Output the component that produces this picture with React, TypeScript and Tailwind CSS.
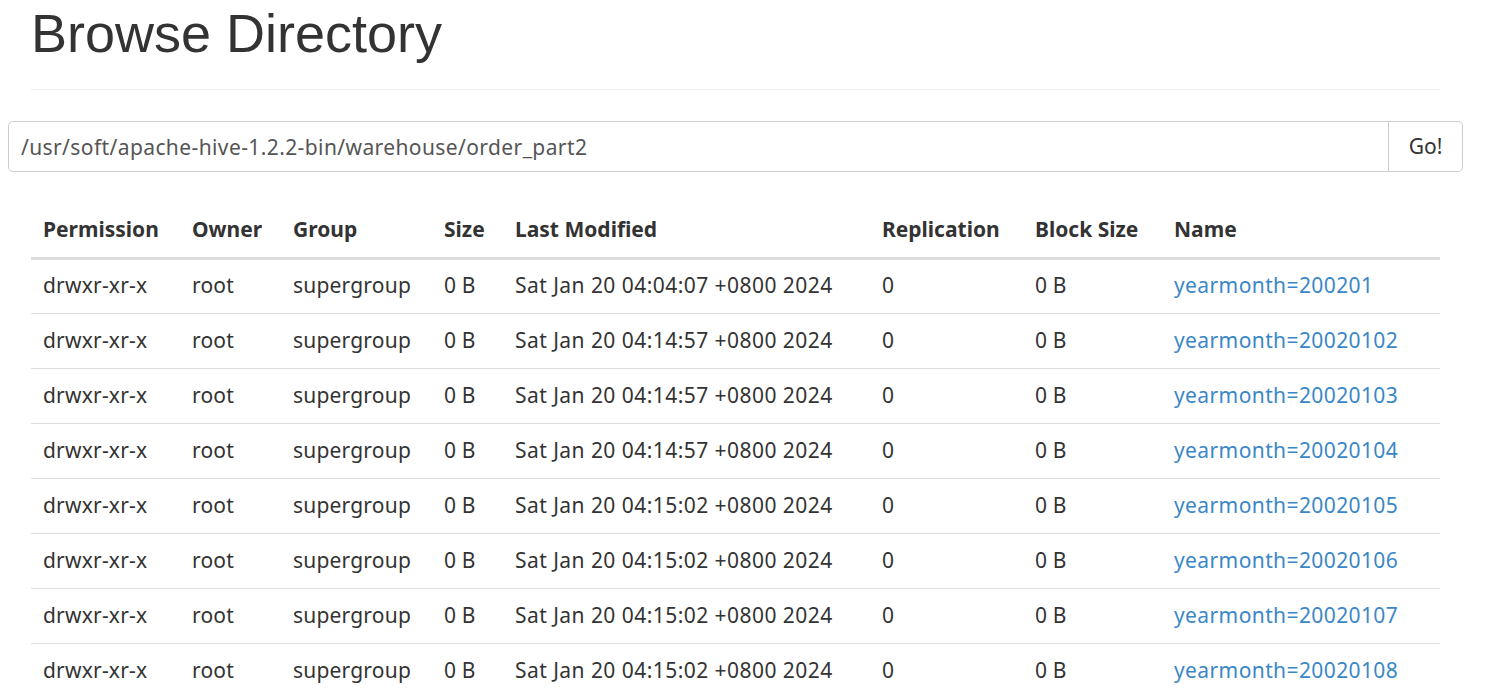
import React from "react";

const rows = [
  { time: "Sat Jan 20 04:04:07 +0800 2024", name: "yearmonth=200201" },
  { time: "Sat Jan 20 04:14:57 +0800 2024", name: "yearmonth=20020102" },
  { time: "Sat Jan 20 04:14:57 +0800 2024", name: "yearmonth=20020103" },
  { time: "Sat Jan 20 04:14:57 +0800 2024", name: "yearmonth=20020104" },
  { time: "Sat Jan 20 04:15:02 +0800 2024", name: "yearmonth=20020105" },
  { time: "Sat Jan 20 04:15:02 +0800 2024", name: "yearmonth=20020106" },
  { time: "Sat Jan 20 04:15:02 +0800 2024", name: "yearmonth=20020107" },
  { time: "Sat Jan 20 04:15:02 +0800 2024", name: "yearmonth=20020108" },
];

const cols = [
  { label: "Permission", w: "w-[149px]" },
  { label: "Owner", w: "w-[101px]" },
  { label: "Group", w: "w-[151px]" },
  { label: "Size", w: "w-[71px]" },
  { label: "Last Modified", w: "w-[367px]" },
  { label: "Replication", w: "w-[153px]" },
  { label: "Block Size", w: "w-[139px]" },
  { label: "Name", w: "w-[278px]" },
];

const App = () => {
  return (
    <div className="h-[690px] w-[1485px] overflow-hidden bg-white text-[#333] font-['Noto_Sans','Open_Sans',sans-serif]">
      <div className="mx-[31px] w-[1409px] border-b border-[#eee] pt-[2px] h-[90px]">
        <h1 className="font-['Liberation_Sans',Arial,sans-serif] text-[54px] leading-[62px] font-normal">
          Browse Directory
        </h1>
      </div>

      <div className="ml-[8px] mt-[31px] flex h-[51px] w-[1455px]">
        <input
          readOnly
          value="/usr/soft/apache-hive-1.2.2-bin/warehouse/order_part2"
          className="h-full flex-1 rounded-l-[5px] border border-[#ccc] px-[12px] text-[21px] tracking-[0.4px] text-[#555] outline-none font-['Noto_Sans','Open_Sans',sans-serif]"
        />
        <button className="h-full w-[74px] rounded-r-[5px] border border-l-0 border-[#ccc] bg-white text-[21px] text-[#333]">
          Go!
        </button>
      </div>

      <table className="ml-[31px] mt-[28px] w-[1409px] table-fixed border-collapse text-[21px] tracking-[0.2px]">
        <thead>
          <tr className="h-[58px] border-b-[3px] border-[#ddd]">
            {cols.map((c) => (
              <th key={c.label} className={`${c.w} px-[12px] pt-[3px] text-left font-bold tracking-normal`}>
                {c.label}
              </th>
            ))}
          </tr>
        </thead>
        <tbody>
          {rows.map((r, i) => (
            <tr key={i} className="h-[55px] border-b border-[#ddd]">
              <td className="px-[12px]">drwxr-xr-x</td>
              <td className="px-[12px]">root</td>
              <td className="px-[12px]">supergroup</td>
              <td className="px-[12px]">0 B</td>
              <td className="px-[12px] tracking-[0.45px]">{r.time}</td>
              <td className="px-[12px]">0</td>
              <td className="px-[12px]">0 B</td>
              <td className="px-[12px]">
                <a href="#" className="text-[#3a87c8] tracking-[0.4px]">
                  {r.name}
                </a>
              </td>
            </tr>
          ))}
        </tbody>
      </table>
    </div>
  );
};

export default App;
